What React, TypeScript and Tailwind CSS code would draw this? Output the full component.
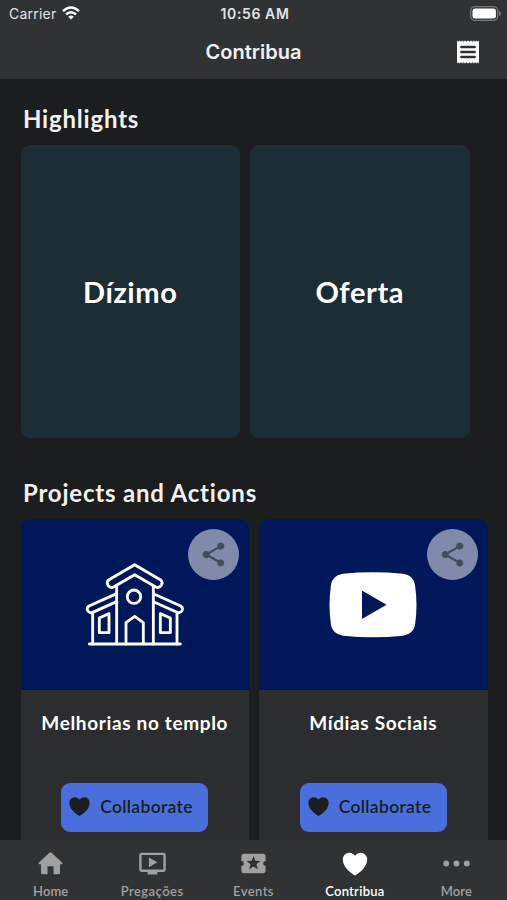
import { clsx } from 'clsx';
import type { ReactNode } from 'react';
import { IoHeart } from 'react-icons/io5';
import { MdLocalActivity, MdOndemandVideo, MdShare } from 'react-icons/md';

const highlights = ['Dízimo', 'Oferta'];

const projects = [
  { title: 'Melhorias no templo', art: <ChurchArt /> },
  { title: 'Mídias Sociais', art: <VideoArt /> },
];

const tabs = [
  { label: 'Home', icon: <HomeIcon />, spacing: 'tracking-[0.1px]' },
  { label: 'Pregações', icon: <MdOndemandVideo className="size-[29px]" />, spacing: 'tracking-[0.45px]' },
  { label: 'Events', icon: <MdLocalActivity className="size-[29px]" />, spacing: 'tracking-[0.4px]' },
  { label: 'Contribua', icon: <IoHeart className="size-[30px]" />, spacing: 'tracking-[0.25px]', active: true },
  { label: 'More', icon: <DotsIcon />, spacing: 'tracking-[0.1px]' },
];

function HomeIcon() {
  return (
    <svg viewBox="0 0 29 29" className="size-[29px]" fill="currentColor">
      <path d="M13.400 3.800Q14.500 2.900 15.600 3.800L26.300 13.700Q27 15 25.700 15.300H24V24Q24 25.200 22.800 25.200H17.500V17.300H11.500V25.200H6.200Q5 25.200 5 24V15.300H3.300Q2 15 2.700 13.700Z" />
    </svg>
  );
}

function DotsIcon() {
  return (
    <svg viewBox="0 0 29 29" className="size-[29px]" fill="currentColor">
      <circle cx="4.200" cy="14.500" r="2.900" />
      <circle cx="14.500" cy="14.500" r="2.900" />
      <circle cx="24.800" cy="14.500" r="2.900" />
    </svg>
  );
}

function ReceiptIcon() {
  return (
    <svg viewBox="0 0 24 24" className="h-6 w-6 justify-self-end">
      <path
        d="M1 0.500L2.200 1.700L3.500 0.500L4.900 1.700L6.300 0.500L7.700 1.700L9.100 0.500L10.500 1.700L12 0.500L13.500 1.700L14.900 0.500L16.300 1.700L17.700 0.500L19.100 1.700L20.500 0.500L21.800 1.700L23 0.500V23.500L21.800 22.300L20.500 23.500L19.100 22.300L17.700 23.500L16.300 22.300L14.900 23.500L13.500 22.300L12 23.500L10.500 22.300L9.100 23.500L7.700 22.300L6.300 23.500L4.900 22.300L3.500 23.500L2.200 22.300L1 23.500Z"
        fill="#fff"
      />
      <path d="M5.300 7H18.700M5.300 12H18.700M5.300 17H18.700" stroke="#313233" strokeWidth="2.400" strokeLinecap="round" />
    </svg>
  );
}

function ChurchArt() {
  return (
    <svg
      viewBox="30 36 300 255"
      className="h-[85px] w-[100px]"
      fill="none"
      stroke="#fff"
      strokeWidth="8.500"
      strokeLinecap="round"
      strokeLinejoin="round"
    >
      <path d="M43 282H316" />
      <path d="M179 44L102 89Q93 96 99 106Q106 116 117 110L179 74L241 110Q252 116 259 106Q265 96 256 89Z" />
      <path d="M125 109V282M235 109V282" />
      <path d="M125 131L42 168Q34 173 38 182Q43 191 53 187L125 155" />
      <path d="M235 131L317 168Q325 173 321 182Q316 191 306 187L235 155" />
      <path d="M53 189V282M306 189V282" />
      <circle cx="177" cy="140" r="20" />
      <path d="M153 282V218L179 199L205 218V282" />
      <path d="M73 204L102 191V248H73Z" />
      <path d="M286 204L256 191V248H286Z" />
    </svg>
  );
}

function VideoArt() {
  return (
    <svg viewBox="0 0 88 66" className="h-[66px] w-[88px]">
      <path
        d="M14 1.700Q44-1 74 1.700Q84.500 3 86 13Q89 33 86 53Q84.500 62 74 63.700Q44 67 14 63.700Q3.500 62 2 53Q-1 33 2 13Q3.500 3 14 1.700Z"
        fill="#fff"
      />
      <path d="M33 18.500L57.500 32.700L33 47Z" fill="#001759" />
    </svg>
  );
}

function StatusBar() {
  return (
    <div className="grid h-[27px] grid-cols-3 items-center pr-1.5 pl-[9px] text-[14px] text-[#e4e4e5]">
      <div className="flex items-center gap-1.5">
        <span className="tracking-[0.22px]">Carrier</span>
        <svg viewBox="0 0 18 14" className="mb-0.5 h-3.5 w-[18px]" fill="none" stroke="#fff" strokeWidth="2.500">
          <path d="M1 5.200Q9-2.200 17 5.200" />
          <path d="M4 8.400Q9 4 14 8.400" />
          <path d="M9 13.500L6.200 10.700Q9 8.500 11.800 10.700Z" fill="#fff" stroke="none" />
        </svg>
      </div>
      <span className="text-center font-semibold tracking-[0.6px] whitespace-nowrap">10:56 AM</span>
      <svg viewBox="0 0 31 15" className="mb-px h-[15px] w-[31px] justify-self-end">
        <rect x="0.700" y="0.700" width="27" height="13.600" rx="4" fill="none" stroke="#77787a" strokeWidth="1.300" />
        <rect x="2.500" y="2.500" width="23.400" height="10" rx="2.500" fill="#fff" />
        <path d="M29 5Q31 5.500 31 7.500Q31 9.500 29 10Z" fill="#77787a" />
      </svg>
    </div>
  );
}

function Header() {
  return (
    <header className="h-[79px] shrink-0 bg-[#313233] font-['Inter',sans-serif]">
      <StatusBar />
      <div className="grid h-[50px] grid-cols-3 items-center px-[27px]">
        <h1 className="col-start-2 text-center text-[20px] font-semibold text-[#f1f1f2]">Contribua</h1>
        <ReceiptIcon />
      </div>
    </header>
  );
}

function SectionTitle({ children }: { children: ReactNode }) {
  return (
    <h2 className="ml-[2.5px] h-[30px] text-[24px] leading-[30px] font-bold tracking-[0.8px] text-[#f1f1f2]">
      {children}
    </h2>
  );
}

function ProjectCard({ title, art }: { title: string; art: ReactNode }) {
  return (
    <article className="flex h-[340px] w-[228.5px] shrink-0 flex-col items-center overflow-hidden rounded-[9px] bg-[#2c2d2e]">
      <div className="relative flex h-[171px] w-full items-center justify-center bg-[#001759]">
        {art}
        <button className="absolute top-2.5 right-2.5 flex size-[51px] items-center justify-center rounded-full bg-[#808bac] text-[#414d5b]">
          <MdShare className="size-[29px]" />
        </button>
      </div>
      <h3 className="mt-5 text-[19px] leading-[26px] font-bold tracking-[0.65px] whitespace-nowrap text-white">
        {title}
      </h3>
      <button className="mt-[47px] flex h-[49px] w-[147px] items-center rounded-[9px] bg-[#496fdd] pl-1.5 text-[#1b1d20]">
        <IoHeart className="mb-0.5 size-[25px]" />
        <span className="ml-2 text-[17.5px] font-semibold tracking-[0.3px]">Collaborate</span>
      </button>
    </article>
  );
}

function TabBar() {
  return (
    <nav className="grid h-[60px] shrink-0 grid-cols-5 bg-[#313233]">
      {tabs.map(({ label, icon, spacing, active }) => (
        <button
          key={label}
          className={clsx('flex flex-col items-center pt-[9px]', active ? 'text-white' : 'text-[#a0a0a1]')}
        >
          <span className="flex h-[29px] items-center">{icon}</span>
          <span className={clsx('mt-[5px] text-[13px] leading-4 font-semibold', spacing)}>{label}</span>
        </button>
      ))}
    </nav>
  );
}

export default function App() {
  return (
    <div className="flex h-[900px] w-[507px] flex-col overflow-hidden bg-[#1c1d1e] font-['Lato',sans-serif]">
      <Header />
      <main className="min-h-0 flex-1 overflow-hidden pt-[25px] pl-[20.5px]">
        <SectionTitle>Highlights</SectionTitle>
        <div className="mt-[11px] flex gap-2.5">
          {highlights.map((name) => (
            <div
              key={name}
              className="flex h-[293px] w-[219.5px] items-center justify-center rounded-[9px] bg-[#1c2d36] text-[29px] font-bold tracking-[0.6px] text-white"
            >
              {name}
            </div>
          ))}
        </div>
        <div className="mt-10">
          <SectionTitle>Projects and Actions</SectionTitle>
        </div>
        <div className="mt-[11px] flex gap-2.5">
          {projects.map((project) => (
            <ProjectCard key={project.title} {...project} />
          ))}
        </div>
      </main>
      <TabBar />
    </div>
  );
}
